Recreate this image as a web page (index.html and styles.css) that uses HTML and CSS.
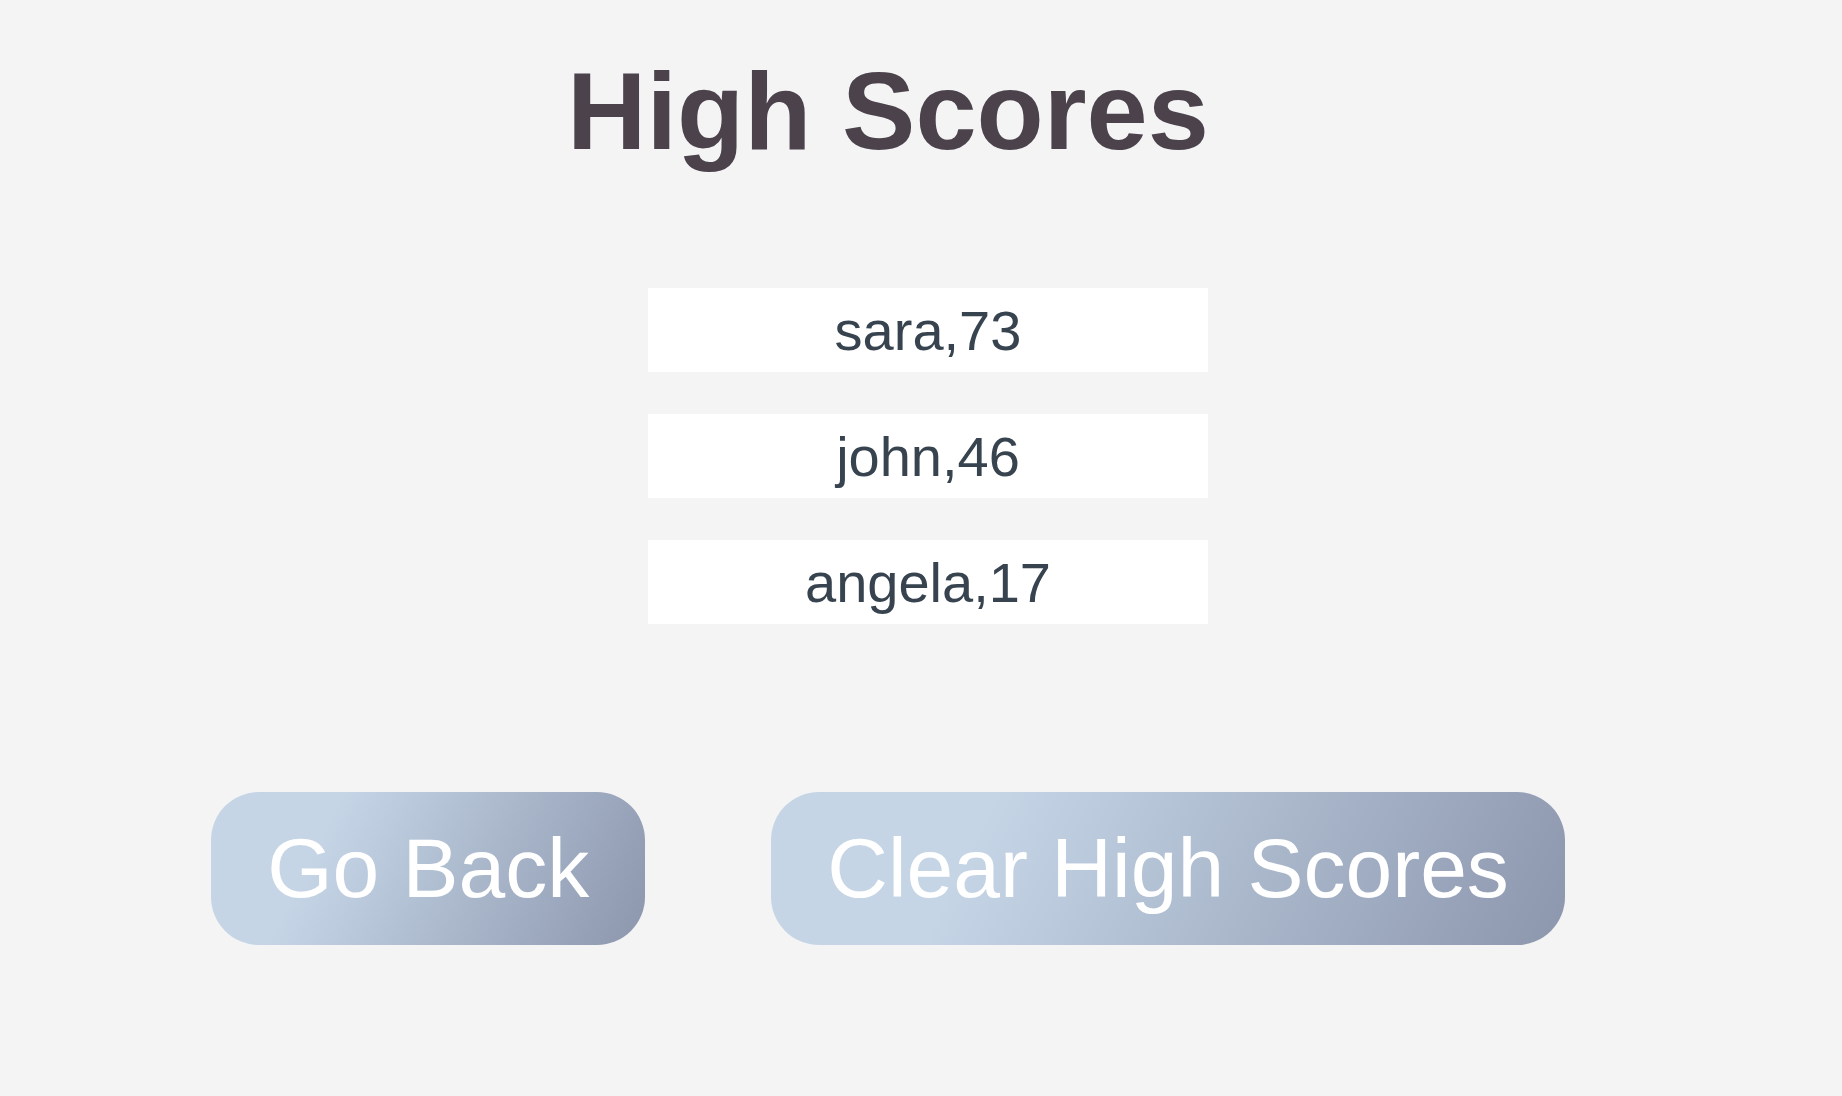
FILE: index.html
```html
<!DOCTYPE html>
<html lang="en">
<head>
<meta charset="utf-8">
<title>High Scores</title>
<link rel="stylesheet" href="styles.css">
</head>
<body>
<div class="page">
  <h1 class="title">High Scores</h1>
  <ul class="scores">
    <li class="score">sara,73</li>
    <li class="score">john,46</li>
    <li class="score">angela,17</li>
  </ul>
  <div class="actions">
    <button class="btn">Go Back</button>
    <button class="btn">Clear High Scores</button>
  </div>
</div>
</body>
</html>
```
FILE: styles.css
```css
html, body {
  margin: 0;
  padding: 0;
  background: #f4f4f4;
}
body {
  font-family: "Liberation Sans", Arial, sans-serif;
}
.page {
  width: 1776px;
  display: flex;
  flex-direction: column;
  align-items: center;
}
.title {
  margin: 0;
  padding-top: 47px;
  font-size: 110px;
  font-weight: 700;
  color: #4c424c;
  line-height: normal;
}
.scores {
  list-style: none;
  margin: 114px 0 0 80px;
  padding: 0;
  width: 560px;
  display: flex;
  flex-direction: column;
  gap: 42px;
}
.score {
  background: #ffffff;
  height: 84px;
  box-sizing: border-box;
  padding-top: 10px;
  text-align: center;
  font-size: 56px;
  line-height: normal;
  color: #37434e;
}
.actions {
  margin-top: 168px;
  display: flex;
  gap: 126px;
}
.btn {
  font-family: "Liberation Sans", Arial, sans-serif;
  font-size: 84px;
  line-height: normal;
  color: #ffffff;
  border: none;
  border-radius: 48px;
  padding: 28px 56px;
  background: linear-gradient(116deg, #c5d5e6 26%, #8c96ad 100%);
  cursor: pointer;
}
```
